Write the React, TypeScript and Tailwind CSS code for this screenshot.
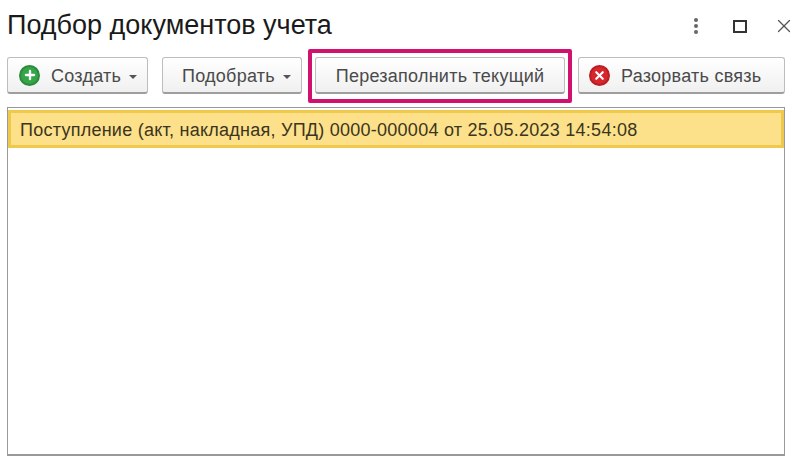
import { Plus, X } from 'lucide-react'
import type { ReactNode } from 'react'

const buttonClass =
  'flex h-[37px] items-center rounded-[3px] border border-[#bdbdbd] border-b-2 border-b-[#9e9e9e] bg-gradient-to-b from-white to-[#f0f0f0] pt-[2px] text-[18px] text-[#4a4a4a] tracking-[0.25px]'

function Caret() {
  return <span className="ml-[8px] mt-[2px] h-0 w-0 border-x-[4px] border-t-[4px] border-x-transparent border-t-[#555]" />
}

function RoundIcon({ color, children }: { color: string; children: ReactNode }) {
  return (
    <span className={`-mt-[2px] flex h-[21px] w-[21px] items-center justify-center rounded-full text-white ${color}`}>
      {children}
    </span>
  )
}

export default function App() {
  return (
    <div className="flex h-[463px] w-[801px] flex-col overflow-hidden bg-white font-['Liberation_Sans',Arial,sans-serif]">
      {/* Header */}
      <div className="flex h-[57px] items-start justify-between pl-[7px] pr-[6px] pt-[9px]">
        <h1 className="text-[27px] leading-[32px] text-[#1a1a1a]">Подбор документов учета</h1>
        <div className="flex items-center pt-[6px] text-[#444]">
          <svg width="6" height="18" viewBox="0 0 6 18" className="mr-[34px]">
            <circle cx="3" cy="3" r="2" fill="#666" />
            <circle cx="3" cy="9" r="2" fill="#666" />
            <circle cx="3" cy="15" r="2" fill="#666" />
          </svg>
          <span className="mr-[26px] h-[13px] w-[14px] border-2 border-[#333]" />
          <X className="h-[22px] w-[22px] text-[#555]" strokeWidth={1.3} />
        </div>
      </div>

      {/* Toolbar */}
      <div className="flex h-[37px] pl-[7px]">
        <button className={`${buttonClass} w-[141px] pl-[11px]`}>
          <RoundIcon color="bg-[#35a648] border-2 border-[#2b8a3c]">
            <Plus className="h-[14px] w-[14px]" strokeWidth={4} />
          </RoundIcon>
          <span className="ml-[11px]">Создать</span>
          <Caret />
        </button>
        <button className={`${buttonClass} ml-[14px] w-[140px] pl-[19px]`}>
          <span>Подобрать</span>
          <Caret />
        </button>
        <div className="relative ml-[13px]">
          <button className={`${buttonClass} w-[250px] justify-center`}>Перезаполнить текущий</button>
          <span className="pointer-events-none absolute -bottom-[9px] -left-[7px] -right-[7px] -top-[8px] rounded-[2px] border-[4px] border-[#d0126e]" />
        </div>
        <button className={`${buttonClass} ml-[13px] w-[207px] pl-[10px]`}>
          <RoundIcon color="bg-[#d7262c] border-2 border-[#b81e24]">
            <X className="h-[13px] w-[13px]" strokeWidth={4} />
          </RoundIcon>
          <span className="ml-[11px]">Разорвать связь</span>
        </button>
      </div>

      {/* List */}
      <div className="ml-[7px] mt-[13px] h-[349px] w-[778px] border border-[#999] border-b-2 bg-white pt-[2px]">
        <div className="flex h-[38px] items-center border-[3px] border-[#efc94c] bg-[#fde08a] pl-[9px] pt-[2px] text-[18px] tracking-[0.25px] text-[#3a3520]">
          Поступление (акт, накладная, УПД) 0000-000004 от 25.05.2023 14:54:08
        </div>
      </div>
    </div>
  )
}
